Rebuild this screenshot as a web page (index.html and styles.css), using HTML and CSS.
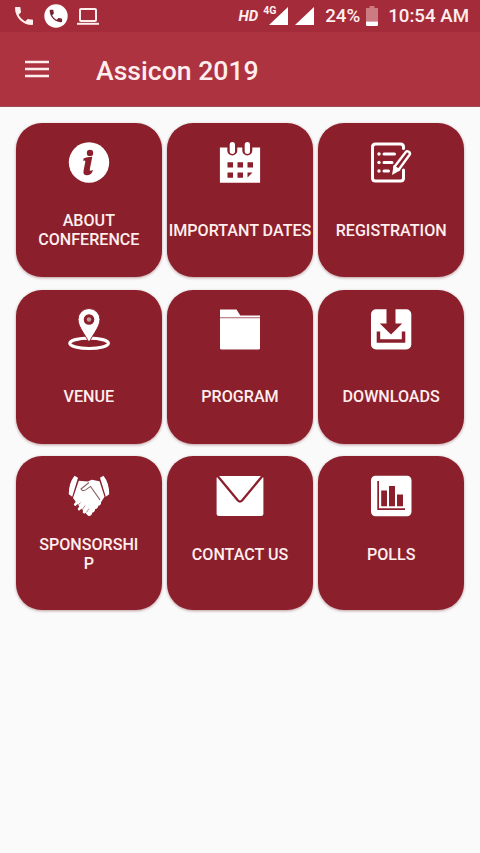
FILE: index.html
```html
<!DOCTYPE html>
<html lang="en">
<head>
<meta charset="utf-8">
<title>Assicon 2019</title>
<link rel="stylesheet" href="styles.css">
</head>
<body>
<div class="status">
  <div class="notices">
    <svg width="20" height="20" viewBox="2 2 20 20" fill="currentColor"><path d="M6.62 10.79c1.44 2.83 3.76 5.14 6.59 6.59l2.2-2.2c.27-.27.67-.36 1.02-.24 1.12.37 2.33.57 3.57.57.55 0 1 .45 1 1V20c0 .55-.45 1-1 1-9.39 0-17-7.61-17-17 0-.55.45-1 1-1h3.500c.55 0 1 .45 1 1 0 1.250.2 2.450.57 3.570.11.35.03.74-.25 1.020z"/></svg>
    <svg width="24" height="24" viewBox="0 0 24 24"><circle cx="12" cy="12" r="11.700" fill="#fff"/><path transform="translate(3.600 3.800) scale(.69)" fill="#762431" d="M6.62 10.79c1.44 2.83 3.76 5.14 6.59 6.59l2.2-2.2c.27-.27.67-.36 1.02-.24 1.12.37 2.33.57 3.57.57.55 0 1 .45 1 1V20c0 .55-.45 1-1 1-9.39 0-17-7.61-17-17 0-.55.45-1 1-1h3.500c.55 0 1 .45 1 1 0 1.250.2 2.450.57 3.570.11.35.03.74-.25 1.020z"/></svg>
    <svg width="24" height="20" viewBox="0 0 24 20" fill="none" stroke="currentColor" stroke-width="2"><rect x="4" y="3" width="16" height="12" rx="1"/><path d="M1 17.800h22"/></svg>
  </div>
  <div class="system">
    <span class="hd">HD</span>
    <div class="signal"><svg width="19" height="18" viewBox="0 0 19 18" fill="#fff"><path d="M0 18 19 0v18z"/></svg><span class="net">4G</span></div>
    <svg class="signal-two" width="19" height="18" viewBox="0 0 19 18" fill="#fff"><path d="M0 18 19 0v18z"/></svg>
    <span class="percent">24%</span>
    <svg class="battery" width="12" height="21" viewBox="0 0 12 21"><path d="M3.500 0h5v2H12v13.500H0V2h3.500z" fill="#cc7b83"/><path d="M0 15.500h12V19q0 1-1 1H1q-1 0-1-1z" fill="#fff"/></svg>
    <span class="clock">10:54 AM</span>
  </div>
</div>
<header class="bar">
  <svg class="menu" width="24" height="18" viewBox="0 0 24 18" stroke="currentColor" stroke-width="2.600"><path d="M0 2h24M0 9h24M0 16h24"/></svg>
  <h1>Assicon 2019</h1>
</header>
<main class="grid">
  <div class="card">
    <svg class="icon" viewBox="0 0 48 48"><circle cx="24" cy="23.500" r="20.200"/><g class="cut"><circle cx="25" cy="13.900" r="3.200"/><path d="M18.800 19.300q4-1.700 8.500-1.500l-2.500 12.400q-.3 1.600.8 1.600.8 0 2.300-.8-.8 5-5.600 5.200-4.500.2-3.800-4.300l1.800-9.200q.2-1.300-1-1.300l-1.300.3z"/></g></svg>
    <span class="label">ABOUT CONFERENCE</span>
  </div>
  <div class="card">
    <svg class="icon" viewBox="0 0 48 48"><path d="M3.900 8.500h40.200v35.200H3.900z"/><g class="cut"><rect x="11.300" y="2" width="10" height="14.500" rx="5"/><rect x="26.300" y="2" width="10" height="14.500" rx="5"/><path d="M11.500 23.300H17v5.200h-5.500zM21.500 23.300H27v5.200h-5.500zM31.500 23.300H37v5.200h-5.500zM11.500 33.500H17v5.200h-5.500zM21.500 33.500H27v5.200h-5.500zM31.500 33.500H36.500l-5 5z"/></g><rect x="13.700" y="3" width="5.300" height="12" rx="2.650"/><rect x="28.700" y="3" width="5.300" height="12" rx="2.650"/></svg>
    <span class="label">IMPORTANT DATES</span>
  </div>
  <div class="card">
    <svg class="icon line" viewBox="0 0 48 48"><path d="M36.500 9.500V8q0-3-3-3H8.500q-3 0-3 3v31q0 3 3 3h25q3 0 3-3V31M17 15h10.500M17 23.500h8M17 32h4.500"/><g class="dots"><circle cx="12" cy="15" r="1.700"/><circle cx="12" cy="23.500" r="1.700"/><circle cx="12" cy="32" r="1.700"/><path d="m25 36 1.700-10 7 5z"/></g><path class="pencil" d="m27.300 28 11.500-15q1.100-1.400 3-.2 1.900 1.400.8 3L31.500 31z"/></svg>
    <span class="label">REGISTRATION</span>
  </div>
  <div class="card">
    <svg class="icon" viewBox="0 0 48 48"><ellipse cx="24.100" cy="37.300" rx="19.300" ry="5.200" fill="none" stroke="#fff" stroke-width="3.200"/><path d="M24 36.500C20.500 29 13 21 13 13.500a11 11 0 0 1 22 0C35 21 27.500 29 24 36.500z" stroke="#8b1f2b" stroke-width="1"/><circle class="cut" cx="24" cy="13.500" r="5.300"/><circle cx="24" cy="13.500" r="2.200" fill="#c29a9f"/></svg>
    <span class="label">VENUE</span>
  </div>
  <div class="card">
    <svg class="icon" viewBox="0 0 48 48"><path d="M4 3.500h16.500l3.800 6H44v33q0 1-1.500 1h-37Q4 43.500 4 42.500z"/><path d="M4 11.700h40" stroke="#a96069" stroke-width="1.100"/></svg>
    <span class="label">PROGRAM</span>
  </div>
  <div class="card">
    <svg class="icon" viewBox="0 0 48 48"><rect x="4" y="3.200" width="40.300" height="40.300" rx="5"/><path class="cut" d="M19.500 3h9v14.500h6.700L24 28.500 12.800 17.500h6.700zM9.700 25.500h3.500v7.800h21.600v-7.800h3.500v11.300H9.700z"/></svg>
    <span class="label">DOWNLOADS</span>
  </div>
  <div class="card lower">
    <svg class="icon" viewBox="0 0 48 48"><path d="m9.500 3.700 3.500 2-5.800 19-3.400-2.500q-.2-11 5.700-18.500zM38.500 3.700l-3.500 2 5.800 19 3.400-2.500q.2-11-5.700-18.500z"/><path d="m13.800 8.700 9 .8 4-1.800 7.700 1.500 5 15.500-3.500 5.500q.5 3-2.800 3.500 0 3-3 3.200-.4 3.300-2.800 3.500-.8 3.800-4 3.500L15 35.500 8 26z"/><path d="m13.800 28-3.500 4.500M18.500 31l-4.300 6M22.500 34l-3.300 6M26 37l-2.500 4.500" stroke="#fff" stroke-width="2.800" stroke-linecap="round"/><path d="m15.500 30.500-3.500 4M20 33.500 17 38M24 36.500l-2.500 4" stroke="#a8515d" stroke-width=".7"/><path class="crease" d="m24 10.500-8 6.500q1.500 3 5 .6l4.500-3.200 9.500 13.500"/></svg>
    <span class="label">SPONSORSHI<br>P</span>
  </div>
  <div class="card lower">
    <svg class="icon" viewBox="0 0 48 48"><rect x=".6" y="4" width="46.800" height="40" rx="2.500"/><path d="m1.200 3.500 20.700 25q2.100 2.200 4.200 0L46.800 3.500" fill="none" stroke="#8b1f2b" stroke-width="2.300"/></svg>
    <span class="label">CONTACT US</span>
  </div>
  <div class="card lower">
    <svg class="icon" viewBox="0 0 48 48"><rect x="4" y="3.700" width="40.500" height="40.500" rx="4.500"/><g class="cut"><path d="M10.300 9h1.700v27.200h26v1.700H10.300zM14.200 18.500H20v15.700h-5.800zM22 14h6v20.200h-6zM30 22.500h6v11.700h-6z"/></g></svg>
    <span class="label">POLLS</span>
  </div>
</main>
</body>
</html>
```
FILE: styles.css
```css
* { box-sizing: border-box; }
body {
  margin: 0;
  height: 853px;
  background: #fafafa;
  font-family: Roboto, "Liberation Sans", sans-serif;
  color: #ffeeee;
  overflow: hidden;
}
svg { display: block; flex: none; }
.status {
  height: 32px;
  background: #a42b39;
  display: flex;
  justify-content: space-between;
  align-items: center;
  padding: 0 11px 0 14px;
}
.notices { display: flex; align-items: center; gap: 10px; }
.notices svg + svg + svg { margin-left: -2px; }
.system {
  display: flex;
  align-items: center;
  white-space: nowrap;
  font-size: 18.7px;
  font-weight: 500;
  line-height: 34px;
}
.hd { font-size: 15px; font-weight: 700; font-style: italic; margin-right: 11px; }
.signal { position: relative; }
.net {
  position: absolute;
  left: -6px;
  top: -2px;
  font-size: 10.5px;
  line-height: 12px;
  font-weight: 700;
}
.signal-two { margin-left: 7px; }
.percent { margin-left: 11px; }
.battery { margin: 0 10px 0 6px; }
.bar {
  height: 75px;
  background: #ad3341;
  border-bottom: 1px solid #a04a54;
  display: flex;
  align-items: center;
  padding-left: 25px;
}
h1 {
  margin: 3px 0 0 47px;
  font-size: 26.6px;
  font-weight: 500;
  line-height: 32px;
  white-space: nowrap;
}
.grid {
  display: grid;
  grid-template-columns: repeat(3, 1fr);
  grid-auto-rows: 154px;
  gap: 12.5px 5.5px;
  padding: 16px 16px 0;
}
.card {
  background: #8b1f2b;
  border-radius: 26px;
  box-shadow: 0 1px 3px rgba(100, 20, 30, .4);
  display: flex;
  flex-direction: column;
  align-items: center;
  padding-top: 16px;
}
.icon { width: 48px; height: 48px; fill: #fff; }
.cut { fill: #8b1f2b; }
.line { fill: none; stroke: #fff; stroke-width: 3; stroke-linecap: round; }
.dots { fill: #fff; stroke: none; }
.pencil { stroke-width: 2.4; stroke-linejoin: round; }
.crease { fill: none; stroke: #8b6268; stroke-width: 1.1; }
.label {
  height: 86px;
  width: 144px;
  display: flex;
  align-items: center;
  justify-content: center;
  padding: 0 20px;
  text-align: center;
  white-space: nowrap;
  font-size: 16.1px;
  font-weight: 500;
  line-height: 19px;
}
.card:first-child .label { white-space: normal; }
.lower .label { height: 68px; }
```
